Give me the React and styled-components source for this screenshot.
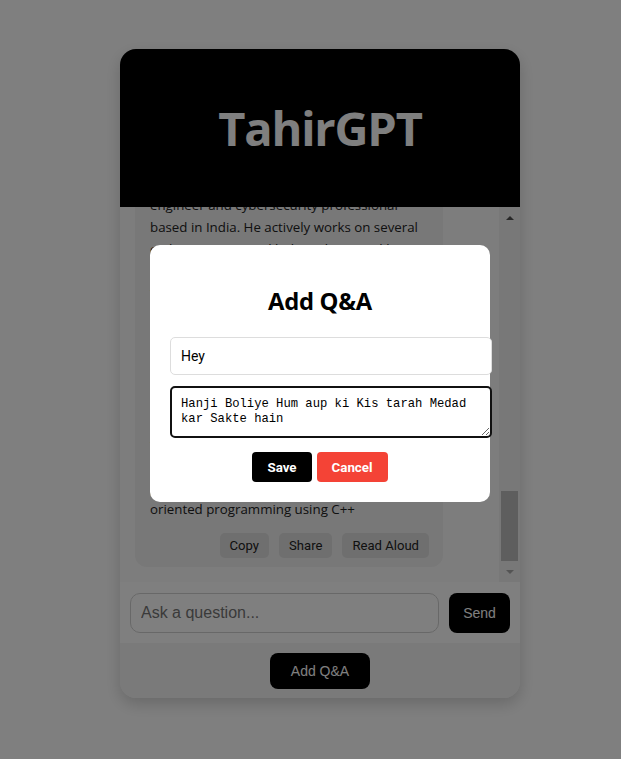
import React, { useLayoutEffect, useRef } from "react";
import styled, { createGlobalStyle } from "styled-components";

const GlobalStyle = createGlobalStyle`
  html, body { margin: 0; padding: 0; background: #ffffff; }
  body { font-family: "Open Sans", "Noto Sans", sans-serif; }
  * { box-sizing: border-box; }
`;

const Page = styled.div`
  padding: 49px 0 0 120px;
  min-height: 759px;
`;

const Card = styled.div`
  position: relative;
  width: 400px;
  height: 649px;
  border-radius: 16px;
  background: #f7f7f7;
  box-shadow: 0 6px 16px rgba(0, 0, 0, 0.18);
  display: flex;
  flex-direction: column;
  overflow: hidden;
`;

const Header = styled.header`
  flex: 0 0 158px;
  background: #000;
  display: flex;
  align-items: center;
  justify-content: center;
`;

const Title = styled.h1`
  margin: 0;
  color: #fff;
  font-family: "Open Sans", sans-serif;
  font-weight: 700;
  font-size: 47px;
  letter-spacing: -1.2px;
`;

const ChatArea = styled.div`
  flex: 0 0 375px;
  min-height: 0;
  display: flex;
  background: #fbfbfb;
`;

const MessageList = styled.div`
  flex: 1 1 auto;
  min-width: 0;
  overflow-y: auto;
  scrollbar-width: none;
  padding: 15px;
  display: flex;
  flex-direction: column;
  gap: 15px;
`;

const ScrollBar = styled.div`
  flex: 0 0 21px;
  display: flex;
  flex-direction: column;
  background: #f0f0f0;
`;

const ScrollArrow = styled.div`
  flex: 0 0 21px;
  display: flex;
  align-items: center;
  justify-content: center;
`;

const ScrollTrack = styled.div`
  flex: 1 1 auto;
  display: flex;
  flex-direction: column;
  justify-content: flex-end;
  padding: 0 2px;
`;

const ScrollThumb = styled.div`
  height: 70px;
  background: #bdbdbd;
`;

const Bubble = styled.div`
  flex: 0 0 auto;
  align-self: ${(p) => (p.$user ? "flex-end" : "flex-start")};
  width: ${(p) => (p.$user ? "auto" : "308px")};
  max-width: 308px;
  padding: ${(p) => (p.$user ? "9px 14px" : "10px 14px 9px 15px")};
  border-radius: 12px;
  background: ${(p) => (p.$user ? "#000" : "#f0f0f0")};
  color: ${(p) => (p.$user ? "#fff" : "#222")};
`;

const BubbleText = styled.p`
  margin: 0;
  font-family: "Open Sans", sans-serif;
  font-size: 13.3px;
  line-height: 21.7px;
  white-space: ${(p) => (p.$fixed ? "nowrap" : "normal")};
`;

const Actions = styled.div`
  display: flex;
  justify-content: flex-end;
  gap: 10px;
  margin-top: 12px;
`;

const ActionButton = styled.button`
  height: 25px;
  padding: 0 10px;
  border: none;
  border-radius: 5px;
  background: #dedede;
  color: #222;
  font-family: Roboto, "Liberation Sans", sans-serif;
  font-size: 13.1px;
`;

const InputBar = styled.div`
  flex: 0 0 61px;
  display: flex;
  align-items: center;
  gap: 10px;
  padding: 0 10px;
  background: #ffffff;
`;

const AskInput = styled.input`
  flex: 1;
  height: 40px;
  padding: 0 10px;
  border: 1px solid #d0d0d0;
  border-radius: 10px;
  font-family: "Liberation Sans", Arial, sans-serif;
  font-size: 16px;
  background: #fff;
  &::placeholder { color: #757575; }
`;

const DarkButton = styled.button`
  height: ${(p) => p.$h}px;
  width: ${(p) => p.$w}px;
  border: none;
  border-radius: 8px;
  background: #000;
  color: #fff;
  font-family: "Liberation Sans", Arial, sans-serif;
  font-size: 14px;
`;

const Footer = styled.div`
  flex: 0 0 55px;
  display: flex;
  justify-content: center;
  padding-top: 10px;
  background: #f5f5f5;
`;

const Backdrop = styled.div`
  position: fixed;
  inset: 0;
  background: rgba(0, 0, 0, 0.5);
  z-index: 10;
`;

const ModalLayer = styled.div`
  position: absolute;
  inset: 0;
  display: flex;
  align-items: center;
  justify-content: center;
  z-index: 11;
`;

const Modal = styled.div`
  width: 340px;
  padding: 20px;
  background: #fff;
  border-radius: 10px;
  text-align: center;
`;

const ModalTitle = styled.h2`
  margin: 20px 0;
  font-family: "Open Sans", sans-serif;
  font-size: 23.8px;
  line-height: 32px;
  font-weight: 700;
  color: #000;
  letter-spacing: -0.3px;
`;

const Field = styled.input`
  display: block;
  box-sizing: content-box;
  width: 100%;
  height: 16px;
  padding: 10px;
  margin: 0 0 11px;
  border: 1px solid #ddd;
  border-radius: 5px;
  font-family: Roboto, "Liberation Sans", sans-serif;
  font-size: 14px;
  color: #000;
  text-align: left;
`;

const AnswerArea = styled.textarea`
  display: block;
  box-sizing: content-box;
  width: 100%;
  height: 30px;
  padding: 9px;
  margin: 0;
  border: 2px solid #111;
  border-radius: 5px;
  font-family: "Liberation Mono", monospace;
  font-size: 12.2px;
  line-height: 15px;
  color: #000;
  resize: both;
  text-align: left;
`;

const ModalActions = styled.div`
  display: flex;
  justify-content: center;
  gap: 5px;
  margin-top: 14px;
`;

const ModalButton = styled.button`
  height: 30px;
  padding: 0 15px;
  border: none;
  border-radius: 4px;
  background: ${(p) => (p.$danger ? "#f44336" : "#000")};
  color: #fff;
  font-family: Roboto, "Liberation Sans", sans-serif;
  font-weight: 700;
  font-size: 13.33px;
`;

const history = [
  { user: false, text: "Hello! I am TahirGPT. Ask me anything about Tahir, his work or his projects." },
  { user: true, text: "Hi" },
  { user: false, text: "Hanji Boliye Hum aup ki Kis tarah Medad kar Sakte hain" },
  { user: true, text: "What can you do?" },
  {
    user: false,
    text:
      "I can answer your questions about Tahir, his skills, his projects and his experience. You can also add your own questions and answers with the Add Q&A button, and I will remember them for the next time you ask.",
  },
  { user: true, text: "What are his skills?" },
  {
    user: false,
    text:
      "Tahir works with HTML, CSS, JavaScript, React, Node.js and Python. He also has experience with ethical hacking, penetration testing, networking and Linux administration.",
  },
  { user: true, text: "Who is Tahir?" },
];

const lines = [
  "Tahir Hussain is a passionate web developer,",
  "engineer and cybersecurity professional",
  "based in India. He actively works on several",
  "coding projects and helps others, and his",
  "knowledge is shared with the community",
  "through blogs and videos. He has strong",
  "experience in HTML, CSS, JavaScript, React,",
  "Node.js, Python, ethical hacking, networking",
  "and Linux administration. In his free time",
  "he builds AI chatbots like TahirGPT and",
  "contributes to many open source projects.",
  "He also mentors students who want to learn",
  "the basics of programming, data structures,",
  "algorithms, databases, web security and",
  "problem solving, with a focus on object",
  "oriented programming using C++",
];

function BotActions() {
  return (
    <Actions>
      <ActionButton>Copy</ActionButton>
      <ActionButton>Share</ActionButton>
      <ActionButton>Read Aloud</ActionButton>
    </Actions>
  );
}

function Arrow({ down, color }) {
  return (
    <svg width="8" height="4" viewBox="0 0 8 4">
      <polygon points={down ? "0,0 8,0 4,4" : "0,4 8,4 4,0"} fill={color} />
    </svg>
  );
}

export default function App() {
  const listRef = useRef(null);
  useLayoutEffect(() => {
    const el = listRef.current;
    if (el) el.scrollTop = el.scrollHeight;
  }, []);

  return (
    <>
      <GlobalStyle />
      <Page>
        <Card>
          <Header>
            <Title>TahirGPT</Title>
          </Header>
          <ChatArea>
            <MessageList ref={listRef}>
              {history.map((m, i) => (
                <Bubble key={i} $user={m.user}>
                  <BubbleText>{m.text}</BubbleText>
                  {!m.user && <BotActions />}
                </Bubble>
              ))}
              <Bubble>
                <BubbleText $fixed>
                  {lines.map((l, i) => (
                    <React.Fragment key={i}>
                      {l}
                      {i < lines.length - 1 && <br />}
                    </React.Fragment>
                  ))}
                </BubbleText>
                <BotActions />
              </Bubble>
            </MessageList>
            <ScrollBar>
              <ScrollArrow>
                <Arrow color="#505050" />
              </ScrollArrow>
              <ScrollTrack>
                <ScrollThumb />
              </ScrollTrack>
              <ScrollArrow>
                <Arrow down color="#a8a8a8" />
              </ScrollArrow>
            </ScrollBar>
          </ChatArea>
          <InputBar>
            <AskInput placeholder="Ask a question..." />
            <DarkButton $w={61} $h={40}>Send</DarkButton>
          </InputBar>
          <Footer>
            <DarkButton $w={100} $h={36}>Add Q&amp;A</DarkButton>
          </Footer>
          <ModalLayer>
            <Modal>
              <ModalTitle>Add Q&amp;A</ModalTitle>
              <Field defaultValue="Hey" />
              <AnswerArea
                rows={2}
                defaultValue="Hanji Boliye Hum aup ki Kis tarah Medad kar Sakte hain"
              />
              <ModalActions>
                <ModalButton>Save</ModalButton>
                <ModalButton $danger>Cancel</ModalButton>
              </ModalActions>
            </Modal>
          </ModalLayer>
        </Card>
        <Backdrop />
      </Page>
    </>
  );
}
